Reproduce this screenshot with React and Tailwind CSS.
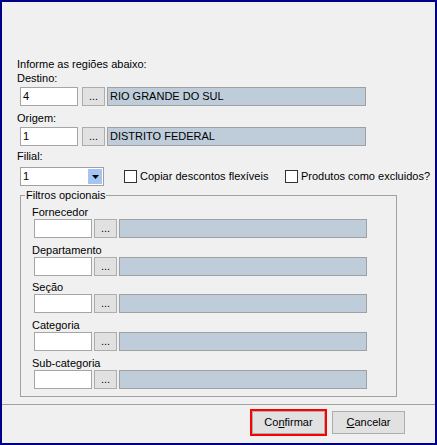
const font = { fontFamily: '"Liberation Sans", Arial, sans-serif' };

function Lookup({ code, name, wide }) {
  return (
    <div className="flex h-[19px]">
      <div className="h-[19px] w-[58px] border border-[#a5a5a5] bg-white pl-[2px] leading-[17px]">{code}</div>
      <div
        className={`${wide ? "ml-[4px]" : "ml-[2px]"} flex h-[19px] w-[23px] items-center justify-center border border-[#adadad] bg-[#e1e1e1] leading-[17px]`}
      >
        ...
      </div>
      <div
        className={`ml-[2px] h-[19px] ${wide ? "w-[259px]" : "w-[248px]"} border border-[#a0a0a0] bg-[#bfcddb] pl-[2px] leading-[17px]`}
      >
        {name}
      </div>
    </div>
  );
}

function Check({ label, className }) {
  return (
    <div className={`flex items-center ${className}`}>
      <div className="h-[13px] w-[13px] border border-[#333333] bg-white" />
      <span className="ml-[3px] leading-[13px]">{label}</span>
    </div>
  );
}

const filtros = [
  { label: "Fornecedor", mt: "" },
  { label: "Departamento", mt: "mt-[6px]" },
  { label: "Seção", mt: "mt-[5px]" },
  { label: "Categoria", mt: "mt-[6px]" },
  { label: "Sub-categoria", mt: "mt-[6px]" },
];

export default function App() {
  return (
    <div
      style={font}
      className="flex h-[445px] w-[437px] flex-col border-2 border-[#000088] bg-[#f0f0f0] text-[11px] text-black"
    >
      <div className="flex-1 pl-[15px] pt-[56px]">
        <div className="h-[13px] leading-[13px]">Informe as regiões abaixo:</div>
        <div className="mt-[1px] h-[13px] leading-[13px]">Destino:</div>
        <div className="ml-[3px] mt-[2px]">
          <Lookup code="4" name="RIO GRANDE DO SUL" wide />
        </div>
        <div className="mt-[6px] h-[13px] leading-[13px]">Origem:</div>
        <div className="ml-[3px] mt-[2px]">
          <Lookup code="1" name="DISTRITO FEDERAL" wide />
        </div>
        <div className="mt-[4px] h-[13px] leading-[13px]">Filial:</div>

        <div className="ml-[3px] mt-[4px] flex h-[19px] items-center">
          <div className="flex h-[19px] w-[84px] border border-[#a0a0a0] bg-white">
            <span className="flex-1 pl-[2px] leading-[17px]">1</span>
            <div className="my-[1px] mr-[1px] flex w-[14px] items-center justify-center bg-[#a6c4f2]">
              <svg width="7" height="4" viewBox="0 0 7 4">
                <path d="M0 0h7L3.5 4z" fill="#000" />
              </svg>
            </div>
          </div>
          <Check label="Copiar descontos flexíveis" className="ml-[20px] w-[161px]" />
          <Check label="Produtos como excluidos?" />
        </div>

        <fieldset className="ml-[3px] mt-[4px] w-[377px] border border-[#a0a0a0] pb-[7px]">
          <legend className="ml-[4px] px-[1px] leading-[11px]">Filtros opcionais</legend>
          <div className="mt-[5px] pl-[11px]">
            {filtros.map((f) => (
              <div key={f.label} className={f.mt}>
                <div className="h-[13px] leading-[13px]">{f.label}</div>
                <div className="ml-[2px]">
                  <Lookup code="" name="" />
                </div>
              </div>
            ))}
          </div>
        </fieldset>
      </div>

      <div className="flex h-[39px] justify-end gap-[7px] border-t border-[#a0a0a0] pr-[30px] pt-[6px]">
        <button className="h-[23px] w-[73px] border border-[#adadad] bg-[#e1e1e1] outline-2 outline-[#ff0000]">
          Co<span className="underline">n</span>firmar
        </button>
        <button className="h-[23px] w-[73px] border border-[#adadad] bg-[#e1e1e1]">
          <span className="underline">C</span>ancelar
        </button>
      </div>
    </div>
  );
}
